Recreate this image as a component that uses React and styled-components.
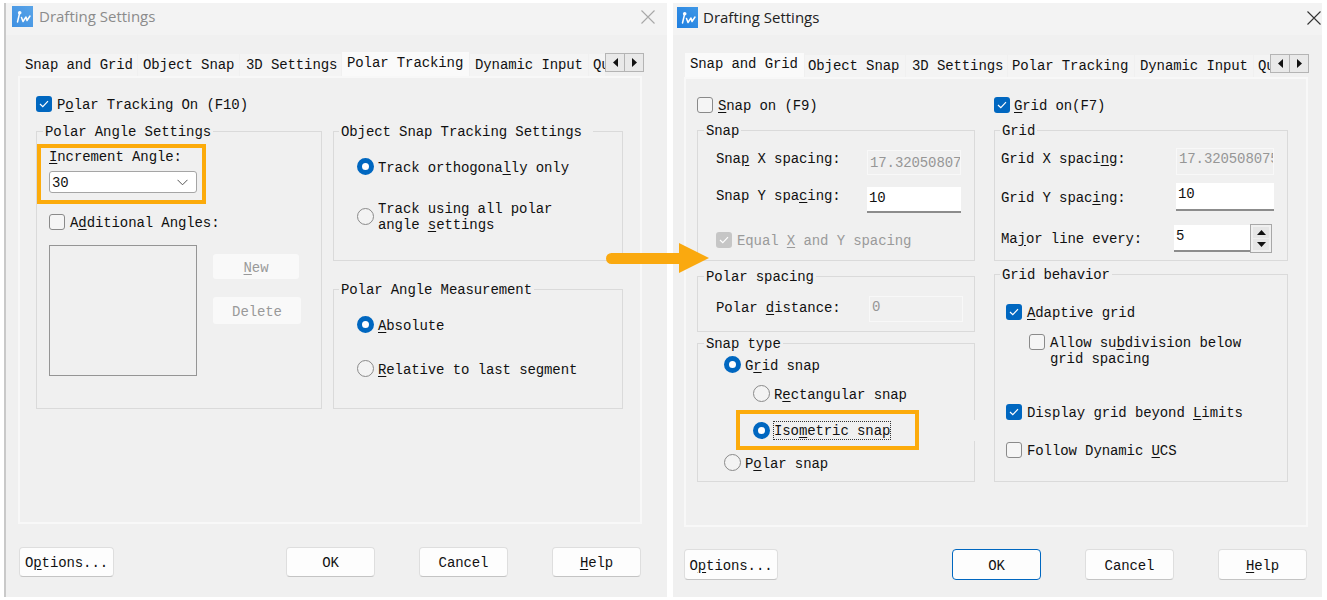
import React from "react";
import styled, { createGlobalStyle, css } from "styled-components";

const GlobalStyle = createGlobalStyle`
  html, body {
    margin: 0;
    background: #ffffff;
    overflow: hidden;
  }
`;

const Page = styled.div`
  position: relative;
  display: flex;
  gap: 6px;
  height: 594px;
  padding: 3px 0 3px 4px;
  font-family: "Liberation Mono", "DejaVu Sans Mono", monospace;
  font-size: 14px;
  letter-spacing: -0.1px;
  line-height: 16px;
  color: #111111;
`;

const Arrow = styled.svg`
  position: absolute;
  left: 606px;
  top: 243px;
`;

const Dialog = styled.div`
  position: relative;
  box-sizing: border-box;
  width: ${(p) => p.$width}px;
  background: #f0f0f0;
  border-left: ${(p) => (p.$edge ? "2px solid #c9c9c9" : "none")};
`;

const TitleBar = styled.div`
  display: flex;
  align-items: flex-start;
  gap: ${(p) => (p.$dim ? 6 : 5)}px;
  box-sizing: border-box;
  height: 32px;
  padding: ${(p) => (p.$dim ? "3px 12px 0 6px" : "4px 1px 0 4px")};
  background: #f3f3f3;
`;

const TitleText = styled.span`
  flex: 1;
  font-family: "Open Sans", "Noto Sans", sans-serif;
  font-size: 15px;
  line-height: 20px;
  letter-spacing: 0;
  color: ${(p) => (p.$dim ? "#8b8b8b" : "#222222")};
`;

const CloseIcon = styled.svg`
  margin-top: 4px;
`;

const TabStrip = styled.div`
  display: flex;
  align-items: flex-end;
  gap: 1px;
  height: 24px;
  margin: ${(p) => (p.$dim ? "17px 0 0 14px" : "18px 0 0 12px")};
`;

const Tab = styled.div`
  box-sizing: border-box;
  flex: none;
  width: ${(p) => p.$width}px;
  height: ${(p) => (p.$active ? 24 : 22)}px;
  padding: 3px 0 0 ${(p) => p.$pad}px;
  overflow: hidden;
  white-space: nowrap;
  background: ${(p) => (p.$active ? "#fafafa" : "#f4f4f4")};
`;

const Scroller = styled.div`
  display: flex;
  flex: none;
  align-self: flex-start;
  box-sizing: border-box;
  width: 39px;
  height: 19px;
  margin: 1px 0 0 -1px;
  border: 1px solid #b4b4b4;
  background: #e9e9e9;
`;

const ScrollButton = styled.div`
  display: flex;
  flex: 1;
  align-items: center;
  justify-content: center;
  & + & {
    border-left: 1px solid #b4b4b4;
  }
`;

const Panel = styled.div`
  box-sizing: border-box;
  width: 624px;
  height: ${(p) => p.$height}px;
  margin-left: ${(p) => p.$left}px;
  padding: 18px 0 0 ${(p) => p.$pad}px;
  border: 2px solid #f8f8f8;
`;

const Columns = styled.div`
  display: grid;
  grid-template-columns: ${(p) => p.$cols};
  column-gap: ${(p) => p.$gap}px;
`;

const Column = styled.div`
  display: flex;
  flex-direction: column;
  align-items: flex-start;
`;

const Group = styled.fieldset`
  box-sizing: border-box;
  width: 100%;
  min-width: 0;
  height: ${(p) => p.$height}px;
  margin: ${(p) => p.$top}px 0 0;
  padding: 0;
  border: 1px solid #dadada;
`;

const GroupBody = styled.div`
  padding-left: ${(p) => p.$pad}px;
`;

const Legend = styled.legend`
  margin-left: ${(p) => p.$left ?? 6}px;
  padding: 0 ${(p) => p.$trail ?? 2}px 0 2px;
  line-height: 16px;
`;

const Label = styled.span`
  display: block;
  padding-top: 1px;
  margin-bottom: -1px;
`;

const Row = styled.div`
  display: flex;
  align-items: ${(p) => (p.$alignTop ? "flex-start" : "center")};
  gap: ${(p) => p.$gap ?? 5}px;
  margin-top: ${(p) => p.$top ?? 0}px;
  margin-left: ${(p) => p.$indent ?? 0}px;
  color: ${(p) => (p.$muted ? "#9a9a9a" : "inherit")};
`;

const Key = styled.u`
  text-underline-offset: 2px;
`;

const Box = styled.span`
  display: flex;
  flex: none;
  align-items: center;
  justify-content: center;
  box-sizing: border-box;
  width: 16px;
  height: 16px;
  border-radius: 3px;
  ${(p) =>
    p.$state === "on" && css`background: #0067c0;`}
  ${(p) =>
    p.$state === "disabled" && css`background: #c6c6c6;`}
  ${(p) =>
    p.$state === "off" && css`border: 1.5px solid #8a8a8a; background: #f5f5f5;`}
`;

const Dot = styled.span`
  flex: none;
  box-sizing: border-box;
  width: 17px;
  height: 17px;
  border-radius: 50%;
  ${(p) =>
    p.$on
      ? css`border: 5px solid #0067c0; background: #ffffff;`
      : css`border: 1.5px solid #8a8a8a; background: #f3f3f3;`}
`;

const Check = ({ state = "off" }) => (
  <Box $state={state}>
    {state !== "off" && (
      <svg width="10" height="8" viewBox="0 0 10 8">
        <path d="M1 4 L3.8 6.6 L9 1.2" fill="none" stroke="#ffffff" strokeWidth="1.2" />
      </svg>
    )}
  </Box>
);

const FieldLabel = styled(Label)`
  flex: none;
  width: ${(p) => p.$width}px;
  margin-top: ${(p) => p.$drop ?? 0}px;
`;

const Field = styled.div`
  flex: none;
  box-sizing: border-box;
  width: ${(p) => p.$width}px;
  height: ${(p) => p.$height}px;
  padding: ${(p) => p.$textTop}px 0 0 ${(p) => p.$textLeft ?? 2}px;
  overflow: hidden;
  white-space: nowrap;
  ${(p) =>
    p.$disabled
      ? css`
          border: 1px solid #f8f8f8;
          color: #969696;
        `
      : css`
          background: #ffffff;
          border-bottom: 2px solid #8c8c8c;
        `}
`;

const FocusText = styled.span`
  display: block;
  padding-top: 1px;
  outline: 1px dotted #333333;
`;

const Select = styled.div`
  display: flex;
  align-items: center;
  justify-content: space-between;
  box-sizing: border-box;
  width: 148px;
  height: 22px;
  margin-top: 7px;
  padding: 0 8px 0 2px;
  background: #ffffff;
  border: 1px solid #a5a5a5;
  border-radius: 3px;
`;

const ListBox = styled.div`
  flex: none;
  box-sizing: border-box;
  width: 148px;
  height: 131px;
  border: 1px solid #959595;
`;

const SideButtons = styled.div`
  display: flex;
  flex-direction: column;
  align-items: flex-start;
  margin-top: 9px;
`;

const DimButton = styled.div`
  display: flex;
  align-items: center;
  justify-content: center;
  width: ${(p) => p.$width}px;
  height: ${(p) => p.$height}px;
  margin-top: ${(p) => p.$top ?? 0}px;
  background: #f9f9f9;
  border-radius: 3px;
  color: #999999;
`;

const SpinBox = styled.div`
  display: flex;
  flex-direction: column;
  flex: none;
  gap: 1px;
  box-sizing: border-box;
  width: 22px;
  height: 29px;
  margin-top: -1px;
  padding: 2px;
  border: 1px solid #a8a8a8;
`;

const SpinPart = styled.div`
  display: flex;
  flex: 1;
  align-items: center;
  justify-content: center;
  background: #e6e6e6;
`;

const Footer = styled.div`
  display: flex;
  gap: 44px;
  margin: ${(p) => p.$margin};
`;

const Button = styled.div`
  display: flex;
  align-items: center;
  justify-content: center;
  box-sizing: border-box;
  width: ${(p) => p.$width ?? 89}px;
  height: ${(p) => p.$height}px;
  margin-right: ${(p) => (p.$first ? "auto" : "0")};
  background: #fdfdfd;
  border: 1px solid ${(p) => (p.$primary ? "#0067c0" : "#dedede")};
  border-bottom-color: ${(p) => (p.$primary ? "#0067c0" : "#c4c4c4")};
  border-radius: 4px;
`;

const AngleHighlight = styled.div`
  position: absolute;
  left: 31px;
  top: 141px;
  box-sizing: border-box;
  width: 169px;
  height: 60px;
  border: 4px solid #fcab0b;
`;

const SnapHighlight = styled.div`
  position: absolute;
  left: 63px;
  top: 407px;
  box-sizing: border-box;
  width: 183px;
  height: 40px;
  border: 4px solid #fcab0b;

  &::after {
    content: "";
    position: absolute;
    left: 233px;
    top: 6px;
    width: 3px;
    height: 21px;
    background: #f0f0f0;
  }
`;

const Logo = ({ id, dim }) => (
  <svg width="21" height="21" viewBox="0 0 21 21" style={{ flex: "none", opacity: dim ? 0.85 : 1 }}>
    <defs>
      <linearGradient id={id} x1="0" y1="1" x2="1" y2="0">
        <stop offset="0" stopColor="#1f7fe0" />
        <stop offset="1" stopColor="#3f97e6" />
      </linearGradient>
    </defs>
    <rect width="21" height="21" fill={`url(#${id})`} />
    <path d="M5.5 16 L7.5 7.5 M9.5 11.5 L11 15.5 L14 11 L15 14.5 L18 10" fill="none" stroke="#ffffff" strokeWidth="1.5" strokeLinecap="round" strokeLinejoin="round" />
    <circle cx="7.7" cy="6.7" r="1.8" fill="#ffffff" />
  </svg>
);

const Close = ({ color }) => (
  <CloseIcon width="14" height="14" viewBox="0 0 14 14">
    <path d="M0.5 0.5 L13.5 13.5 M13.5 0.5 L0.5 13.5" stroke={color} strokeWidth="1.1" />
  </CloseIcon>
);

const ScrollArrows = () => (
  <Scroller>
    <ScrollButton>
      <svg width="5" height="9" viewBox="0 0 5 9"><path d="M5 0 V9 L0 4.5 Z" fill="#111111" /></svg>
    </ScrollButton>
    <ScrollButton>
      <svg width="5" height="9" viewBox="0 0 5 9"><path d="M0 0 V9 L5 4.5 Z" fill="#111111" /></svg>
    </ScrollButton>
  </Scroller>
);

const tabNames = ["Snap and Grid", "Object Snap", "3D Settings", "Polar Tracking", "Dynamic Input", "Qu"];

function Tabs({ widths, pads, active, dim }) {
  return (
    <TabStrip $dim={dim}>
      {tabNames.map((name, i) => (
        <Tab key={name} $width={widths[i]} $pad={pads[i]} $active={i === active}>
          {name}
        </Tab>
      ))}
      <ScrollArrows />
    </TabStrip>
  );
}

function PolarTrackingDialog() {
  return (
    <Dialog $width={663} $edge>
      <TitleBar $dim>
        <Logo id="logo-left" dim />
        <TitleText $dim>Drafting Settings</TitleText>
        <Close color="#a8a8a8" />
      </TitleBar>
      <Tabs widths={[117, 101, 101, 127, 118, 16]} pads={[5, 5, 6, 5, 5, 4]} active={3} dim />
      <Panel $height={448} $left={12} $pad={16}>
        <Row>
          <Check state="on" />
          <Label>P<Key>o</Key>lar Tracking On (F10)</Label>
        </Row>
        <Columns $cols="286px 290px" $gap={11}>
          <Column>
            <Group $height={286} $top={11}>
              <Legend><Label>Polar Angle Settings</Label></Legend>
              <GroupBody $pad={12}>
                <Row $top={9}><Label><Key>I</Key>ncrement Angle:</Label></Row>
                <Select>
                  <Label>30</Label>
                  <svg width="11" height="7" viewBox="0 0 11 7">
                    <path d="M0.5 0.8 L5.5 5.8 L10.5 0.8" fill="none" stroke="#555555" strokeWidth="1" />
                  </svg>
                </Select>
                <Row $top={21}>
                  <Check />
                  <Label>A<Key>d</Key>ditional Angles:</Label>
                </Row>
                <Row $alignTop $gap={16} $top={15}>
                  <ListBox />
                  <SideButtons>
                    <DimButton $width={86} $height={25}><Label><Key>N</Key>ew</Label></DimButton>
                    <DimButton $width={88} $height={27} $top={18}><Label>Delete</Label></DimButton>
                  </SideButtons>
                </Row>
              </GroupBody>
            </Group>
          </Column>
          <Column>
            <Group $height={138} $top={11}>
              <Legend $left={5} $trail={11}><Label>Object Snap Tracking Settings</Label></Legend>
              <GroupBody $pad={23}>
                <Row $gap={4} $top={19}>
                  <Dot $on />
                  <Label>Track orthogona<Key>l</Key>ly only</Label>
                </Row>
                <Row $gap={4} $top={25}>
                  <Dot />
                  <Label>Track using all polar<br />angle <Key>s</Key>ettings</Label>
                </Row>
              </GroupBody>
            </Group>
            <Group $height={128} $top={20}>
              <Legend $left={5}><Label>Polar Angle Measurement</Label></Legend>
              <GroupBody $pad={23}>
                <Row $gap={4} $top={19}>
                  <Dot $on />
                  <Label><Key>A</Key>bsolute</Label>
                </Row>
                <Row $gap={4} $top={27}>
                  <Dot />
                  <Label><Key>R</Key>elative to last segment</Label>
                </Row>
              </GroupBody>
            </Group>
          </Column>
        </Columns>
      </Panel>
      <Footer $margin="23px 26px 0 13px">
        <Button $first $width={95} $height={30}><Label>O<Key>p</Key>tions...</Label></Button>
        <Button $height={30}><Label>OK</Label></Button>
        <Button $height={30}><Label>Cancel</Label></Button>
        <Button $height={30}><Label><Key>H</Key>elp</Label></Button>
      </Footer>
      <AngleHighlight />
    </Dialog>
  );
}

function SnapGridDialog() {
  return (
    <Dialog $width={649}>
      <TitleBar>
        <Logo id="logo-right" />
        <TitleText>Drafting Settings</TitleText>
        <Close color="#333333" />
      </TitleBar>
      <Tabs widths={[119, 100, 101, 126, 118, 16]} pads={[5, 3, 6, 4, 5, 4]} active={0} />
      <Panel $height={450} $left={11} $pad={11}>
        <Columns $cols="278px 294px" $gap={19}>
          <Column>
            <Row>
              <Check />
              <Label><Key>S</Key>nap on (F9)</Label>
            </Row>
            <Group $height={139} $top={9}>
              <Legend><Label>Snap</Label></Legend>
              <GroupBody $pad={18}>
                <Row $alignTop $gap={0} $top={12}>
                  <FieldLabel $width={151}>Sna<Key>p</Key> X spacing:</FieldLabel>
                  <Field $disabled $width={94} $height={25} $textTop={4}>17.32050807</Field>
                </Row>
                <Row $alignTop $gap={0} $top={12}>
                  <FieldLabel $width={151}>Snap Y spa<Key>c</Key>ing:</FieldLabel>
                  <Field $width={94} $height={26} $textTop={3}>10</Field>
                </Row>
                <Row $top={19} $muted>
                  <Check state="disabled" />
                  <Label>Equal <Key>X</Key> and Y spacing</Label>
                </Row>
              </GroupBody>
            </Group>
            <Group $height={64} $top={7}>
              <Legend><Label>Polar spacing</Label></Legend>
              <GroupBody $pad={18}>
                <Row $alignTop $gap={0} $top={12}>
                  <FieldLabel $width={153} $drop={3}>Polar <Key>d</Key>istance:</FieldLabel>
                  <Field $disabled $width={94} $height={26} $textTop={2}>0</Field>
                </Row>
              </GroupBody>
            </Group>
            <Group $height={147} $top={3}>
              <Legend><Label>Snap type</Label></Legend>
              <GroupBody $pad={26}>
                <Row $gap={4} $top={5}>
                  <Dot $on />
                  <Label>G<Key>r</Key>id snap</Label>
                </Row>
                <Row $gap={4} $top={12} $indent={29}>
                  <Dot />
                  <Label>R<Key>e</Key>ctangular snap</Label>
                </Row>
                <Row $gap={4} $top={20} $indent={29}>
                  <Dot $on />
                  <FocusText>Iso<Key>m</Key>etric snap</FocusText>
                </Row>
                <Row $gap={4} $top={15}>
                  <Dot />
                  <Label>P<Key>o</Key>lar snap</Label>
                </Row>
              </GroupBody>
            </Group>
          </Column>
          <Column>
            <Row $gap={4}>
              <Check state="on" />
              <Label><Key>G</Key>rid on(F7)</Label>
            </Row>
            <Group $height={139} $top={9}>
              <Legend $left={5}><Label>Grid</Label></Legend>
              <GroupBody $pad={6}>
                <Row $alignTop $gap={0} $top={10}>
                  <FieldLabel $width={175} $drop={2}>Grid X spaci<Key>n</Key>g:</FieldLabel>
                  <Field $disabled $width={98} $height={27} $textTop={2}>17.320508075</Field>
                </Row>
                <Row $alignTop $gap={0} $top={8}>
                  <FieldLabel $width={175} $drop={6}>Grid Y spac<Key>i</Key>ng:</FieldLabel>
                  <Field $width={98} $height={28} $textTop={3}>10</Field>
                </Row>
                <Row $alignTop $gap={0} $top={14}>
                  <FieldLabel $width={173} $drop={5}>Ma<Key>j</Key>or line every:</FieldLabel>
                  <Field $width={76} $height={27} $textTop={3}>5</Field>
                  <SpinBox>
                    <SpinPart>
                      <svg width="9" height="5" viewBox="0 0 9 5"><path d="M0 5 H9 L4.5 0 Z" fill="#111111" /></svg>
                    </SpinPart>
                    <SpinPart>
                      <svg width="9" height="5" viewBox="0 0 9 5"><path d="M0 0 H9 L4.5 5 Z" fill="#111111" /></svg>
                    </SpinPart>
                  </SpinBox>
                </Row>
              </GroupBody>
            </Group>
            <Group $height={216} $top={5}>
              <Legend $left={5}><Label>Grid behavior</Label></Legend>
              <GroupBody $pad={11}>
                <Row $top={22}>
                  <Check state="on" />
                  <Label><Key>A</Key>daptive grid</Label>
                </Row>
                <Row $alignTop $top={14} $indent={23}>
                  <Check />
                  <Label>Allow su<Key>b</Key>division below<br />grid spacing</Label>
                </Row>
                <Row $top={38}>
                  <Check state="on" />
                  <Label>Display grid beyond <Key>L</Key>imits</Label>
                </Row>
                <Row $top={22}>
                  <Check />
                  <Label>Follow Dynamic <Key>U</Key>CS</Label>
                </Row>
              </GroupBody>
            </Group>
          </Column>
        </Columns>
      </Panel>
      <Footer $margin="22px 15px 0 11px">
        <Button $first $width={94} $height={31}><Label>O<Key>p</Key>tions...</Label></Button>
        <Button $primary $height={31}><Label>OK</Label></Button>
        <Button $height={31}><Label>Cancel</Label></Button>
        <Button $height={31}><Label><Key>H</Key>elp</Label></Button>
      </Footer>
      <SnapHighlight />
    </Dialog>
  );
}

export default function App() {
  return (
    <>
      <GlobalStyle />
      <Page>
        <PolarTrackingDialog />
        <SnapGridDialog />
        <Arrow width="104" height="30" viewBox="0 0 104 30">
          <path d="M5.5 10 H73 V0 L103 15 L73 30 V21 H5.5 A5.5 5.5 0 0 1 5.5 10 Z" fill="#faa90f" />
        </Arrow>
      </Page>
    </>
  );
}
